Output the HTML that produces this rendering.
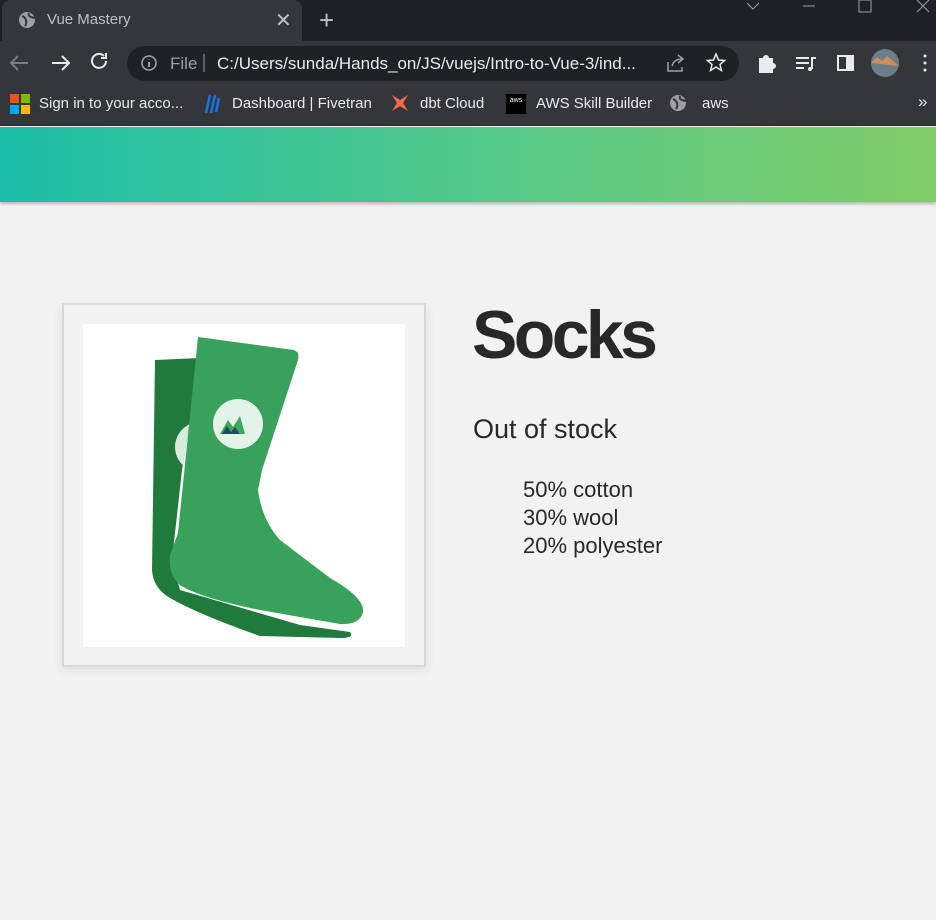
<!DOCTYPE html>
<html><head><meta charset="utf-8"><style>
*{margin:0;padding:0;box-sizing:border-box}
body{width:936px;height:920px;overflow:hidden;background:#f2f2f2;font-family:"Liberation Sans",sans-serif;position:relative}
.tabs{position:absolute;left:0;top:0;width:936px;height:41px;background:#202124}
.tab{position:absolute;left:2px;top:0;width:300px;height:41px;background:#35363a;border-radius:8px 8px 0 0}
.toolbar{position:absolute;left:0;top:41px;width:936px;height:45px;background:#35363a}
.omni{position:absolute;left:127px;top:5px;width:612px;height:35px;background:#202124;border-radius:18px}
.bm{position:absolute;left:0;top:86px;width:936px;height:40px;background:#35363a;border-bottom:1px solid #2a2a2d}
.t{position:absolute;color:#e8eaed;font-size:15px;white-space:nowrap}
.hdr{position:absolute;left:0;top:127px;width:936px;height:75px;background:linear-gradient(90deg,#1bbfa8,#52c98b 50%,#81cd68);box-shadow:0 2px 3px rgba(0,0,0,.25)}
.frame{position:absolute;left:62px;top:303px;width:364px;height:364px;border:2px solid #d8d8d8;box-shadow:0 4px 10px rgba(0,0,0,.08)}
.img{position:absolute;left:83px;top:324px;width:322px;height:323px;background:#fff}
h1{position:absolute;left:472px;top:296px;font-size:68px;font-weight:bold;color:#282828;letter-spacing:-3.6px}
.oos{position:absolute;left:473px;top:414px;font-size:27px;color:#282828}
ul{position:absolute;left:523px;top:476px;list-style:none;font-size:22px;line-height:28px;color:#282828}
</style></head><body>
<div class="tabs"><div class="tab"></div>
<svg style="position:absolute;left:18px;top:11px" width="18" height="18"><circle cx="9" cy="9" r="8" fill="#9aa0a6"/><path d="M4 5q3 1 4 4t-1 6M11 2q-1 3 2 4t4 1" stroke="#35363a" stroke-width="2" fill="none"/></svg>
<div class="t" style="left:47px;top:11px;color:#bdc1c6">Vue Mastery</div>
<div class="t" style="left:275px;top:8px;font-size:20px;color:#bdc1c6">✕</div>
<div class="t" style="left:319px;top:5px;font-size:26px;color:#bdc1c6">+</div>
<svg style="position:absolute;left:745px;top:0" width="191" height="16" stroke="#9aa0a6" fill="none"><path d="M2 3l6 6 6-6"/><path d="M58 6h12"/><rect x="114" y="0" width="12" height="12"/><path d="M172 0l12 12M184 0l-12 12"/></svg>
</div>
<div class="toolbar"><div class="omni"></div>
<svg style="position:absolute;left:0;top:0" width="936" height="45" fill="none" stroke-width="2">
<path d="M28 22h-16M18 15l-7 7 7 7" stroke="#7a7c80"/>
<path d="M52 22h16M62 15l7 7-7 7" stroke="#e8eaed"/>
<path d="M106 20a7 7 0 1 1-2-5M106 12v5h-5" stroke="#e8eaed"/>
<circle cx="149" cy="22" r="7" stroke="#9aa0a6" stroke-width="1.6"/><path d="M149 21v5M149 18v0.5" stroke="#9aa0a6"/>
<path d="M204 13v18" stroke="#9aa0a6" stroke-width="1"/>
<path d="M668 21v9h14v-4M672 25q2-7 10-7M678 14l5 4-5 4" stroke="#9aa0a6" stroke-width="1.5"/>
<path d="M716 13l2.5 6 6 .5-4.5 4 1.5 6-5.5-3.5-5.5 3.5 1.5-6-4.5-4 6-.5z" stroke="#e8eaed" stroke-width="1.5"/>
<path d="M759 17h4a3 3 0 0 1 6 0h4v5a3 3 0 0 1 0 6v4h-14z" fill="#e8eaed" stroke="none"/>
<path d="M796 17h13M796 22h13M796 27h8M812 28v-11h4" stroke="#e8eaed"/><circle cx="810" cy="28" r="2" fill="#e8eaed"/>
<rect x="838" y="15" width="15" height="14" stroke="#e8eaed"/><rect x="846" y="15" width="7" height="14" fill="#e8eaed" stroke="none"/>
<circle cx="885" cy="22" r="14" fill="#6b7f8a" stroke="none"/><path d="M871 22l6-6 5 4 5-5 12 10" fill="#d28b5a" stroke="none"/>
<circle cx="925" cy="15" r="1.5" fill="#e8eaed" stroke="none"/><circle cx="925" cy="22" r="1.5" fill="#e8eaed" stroke="none"/><circle cx="925" cy="29" r="1.5" fill="#e8eaed" stroke="none"/>
</svg>
<div class="t" style="left:170px;top:13px;font-size:17px;color:#9aa0a6">File</div>
<div class="t" style="left:217px;top:13px;font-size:17px">C:/Users/sunda/Hands_on/JS/vuejs/Intro-to-Vue-3/ind...</div>
</div>
<div class="bm">
<svg style="position:absolute;left:10px;top:8px" width="20" height="20"><rect width="9" height="9" fill="#f25022"/><rect x="11" width="9" height="9" fill="#7fba00"/><rect y="11" width="9" height="9" fill="#00a4ef"/><rect x="11" y="11" width="9" height="9" fill="#ffb900"/></svg>
<div class="t" style="left:39px;top:9px">Sign in to your acco...</div>
<svg style="position:absolute;left:204px;top:8px" width="16" height="20" stroke="#1a73e8" stroke-width="2.5"><path d="M6 1l-4 18M11 1l-4 18M15 4l-3 14"/></svg>
<div class="t" style="left:232px;top:9px">Dashboard | Fivetran</div>
<svg style="position:absolute;left:390px;top:7px" width="20" height="20"><path d="M2 2l8 5 8-5-5 8 5 8-8-5-8 5 5-8z" fill="#ff694a"/></svg>
<div class="t" style="left:420px;top:9px">dbt Cloud</div>
<div style="position:absolute;left:506px;top:8px;width:20px;height:20px;background:#000;color:#fff;font-size:7px;text-align:center;line-height:14px">aws</div>
<div class="t" style="left:536px;top:9px">AWS Skill Builder</div>
<svg style="position:absolute;left:669px;top:8px" width="18" height="18"><circle cx="9" cy="9" r="8" fill="#9aa0a6"/><path d="M4 5q3 1 4 4t-1 6M11 2q-1 3 2 4t4 1" stroke="#35363a" stroke-width="2" fill="none"/></svg>
<div class="t" style="left:702px;top:9px">aws</div>
<div class="t" style="left:918px;top:6px;font-size:17px">»</div>
</div>
<div class="hdr"></div>
<div class="frame"></div>
<div class="img">
<svg width="322" height="323" viewBox="83 324 322 323">
<defs><clipPath id="bk"><path d="M155 360L200 358L182 470L172 560L180 590L300 625L350 632Q355 638 340 638L260 636Q200 615 170 598Q153 588 152 570Z"/></clipPath></defs>
<path d="M155 360L200 358L182 470L172 560L180 590L300 625L350 632Q355 638 340 638L260 636Q200 615 170 598Q153 588 152 570Z" fill="#1f7a3c"/>
<circle cx="200" cy="447" r="25" fill="#d8ecdc" clip-path="url(#bk)"/>
<path d="M198 337L294 350Q300 352 298 360L262 470L258 490Q262 520 280 540L330 578Q365 598 363 612Q360 625 340 624L260 610Q200 598 180 585Q168 575 170 555L178 533Z" fill="#38a15a"/>
<circle cx="238" cy="424" r="25" fill="#e4f3e8"/>
<path d="M220 434l8-14 5 7 7-11 5 18z" fill="#3ba85e"/><path d="M222 434l5-8 4 6 4-5 5 7z" fill="#244a5e"/>
</svg>
</div>
<h1>Socks</h1>
<div class="oos">Out of stock</div>
<ul><li>50% cotton</li><li>30% wool</li><li>20% polyester</li></ul>
</body></html>
